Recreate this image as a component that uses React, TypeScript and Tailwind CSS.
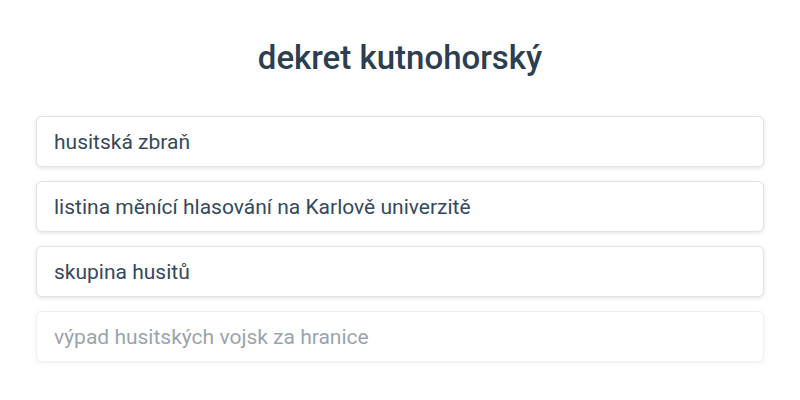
import React from 'react';

const options = [
    'husitská zbraň',
    'listina měnící hlasování na Karlově univerzitě',
    'skupina husitů',
    'výpad husitských vojsk za hranice',
];

export default function App() {
    return (
        <div className="min-h-screen bg-white font-['Roboto',sans-serif] text-[#2c3e50]">
            <div className="px-9 pt-[38px]">
                <h1 className="text-center text-[33px] leading-[40px] font-medium">
                    dekret kutnohorský
                </h1>

                <div className="mt-[38px] flex flex-col gap-[14px]">
                    {options.map((text, i) => (
                        <button
                            key={text}
                            className={
                                i === options.length - 1
                                    ? 'h-[51px] w-full flex items-center px-[17px] pt-[2px] rounded-md border border-[#e3e3e3] bg-white shadow-[0_1px_4px_rgba(0,0,0,0.12)] text-left text-[21px] text-[#34495e] opacity-50'
                                    : 'h-[51px] w-full flex items-center px-[17px] pt-[2px] rounded-md border border-[#e3e3e3] bg-white shadow-[0_1px_4px_rgba(0,0,0,0.12)] text-left text-[21px] text-[#34495e]'
                            }
                        >
                            {text}
                        </button>
                    ))}
                </div>
            </div>
        </div>
    );
}
